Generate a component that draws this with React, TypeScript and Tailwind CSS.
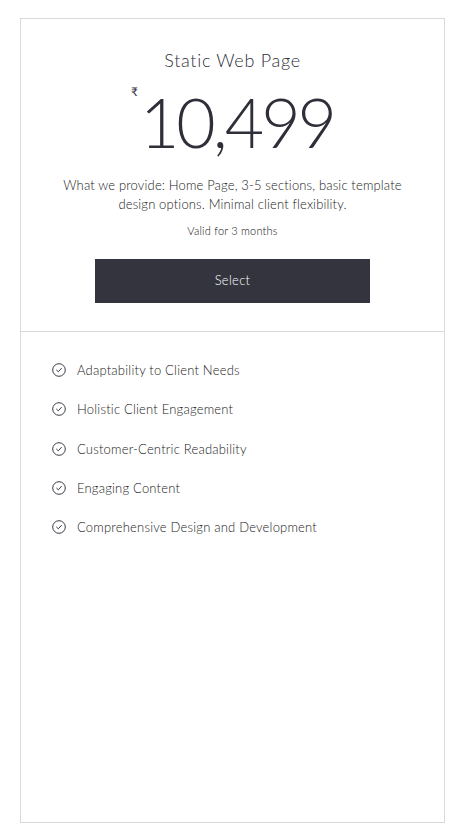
import React from "react";

const features = [
  "Adaptability to Client Needs",
  "Holistic Client Engagement",
  "Customer-Centric Readability",
  "Engaging Content",
  "Comprehensive Design and Development",
];

function CheckCircle() {
  return (
    <svg width="14" height="14" viewBox="0 0 14 14" fill="none" className="shrink-0">
      <circle cx="7" cy="7" r="6.3" stroke="#3a3a44" strokeWidth="1" />
      <path d="M4.6 7.2 L6.3 8.8 L9.4 5.4" stroke="#3a3a44" strokeWidth="1" strokeLinecap="round" strokeLinejoin="round" />
    </svg>
  );
}

export default function App() {
  return (
    <div className="w-[465px] h-[832px] bg-white pt-[18px] px-[20px] pb-[9px]" style={{ fontFamily: "Lato, 'Open Sans', sans-serif" }}>
      <div className="h-full border border-[#d9d9d9] flex flex-col">
        <div className="flex flex-col items-center pt-[29px] pb-[28px] border-b border-[#d9d9d9]">
          <div className="text-[18px] leading-[24px] font-light text-[#2f2f3a] tracking-[0.7px]">Static Web Page</div>
          <div className="flex items-start mt-[16px]">
            <span className="text-[12px] leading-[12px] text-[#2f2f3a] mt-[-2px] mr-[2px]">₹</span>
            <span className="text-[68px] leading-[68px] font-light text-[#2f2f3a] tracking-[-3px]">10,499</span>
          </div>
          <p className="mt-[20px] text-[13px] leading-[19px] font-light text-[#222] text-center px-[36px] tracking-[0.15px]">
            What we provide: Home Page, 3-5 sections, basic template design options. Minimal client flexibility.
          </p>
          <div className="mt-[10px] text-[11px] leading-[14px] font-light text-[#111] tracking-[0.2px]">Valid for 3 months</div>
          <button className="mt-[21px] w-[275px] h-[44px] bg-[#34343f] text-white text-[13px] font-light tracking-[0.3px]">Select</button>
        </div>
        <ul className="flex flex-col pt-[29px] pl-[31px] gap-[21.3px]">
          {features.map((f) => (
            <li key={f} className="flex items-center gap-[11px] h-[18px]">
              <CheckCircle />
              <span className="text-[13px] leading-[18px] font-light text-[#222] tracking-[0.2px]">{f}</span>
            </li>
          ))}
        </ul>
      </div>
    </div>
  );
}
